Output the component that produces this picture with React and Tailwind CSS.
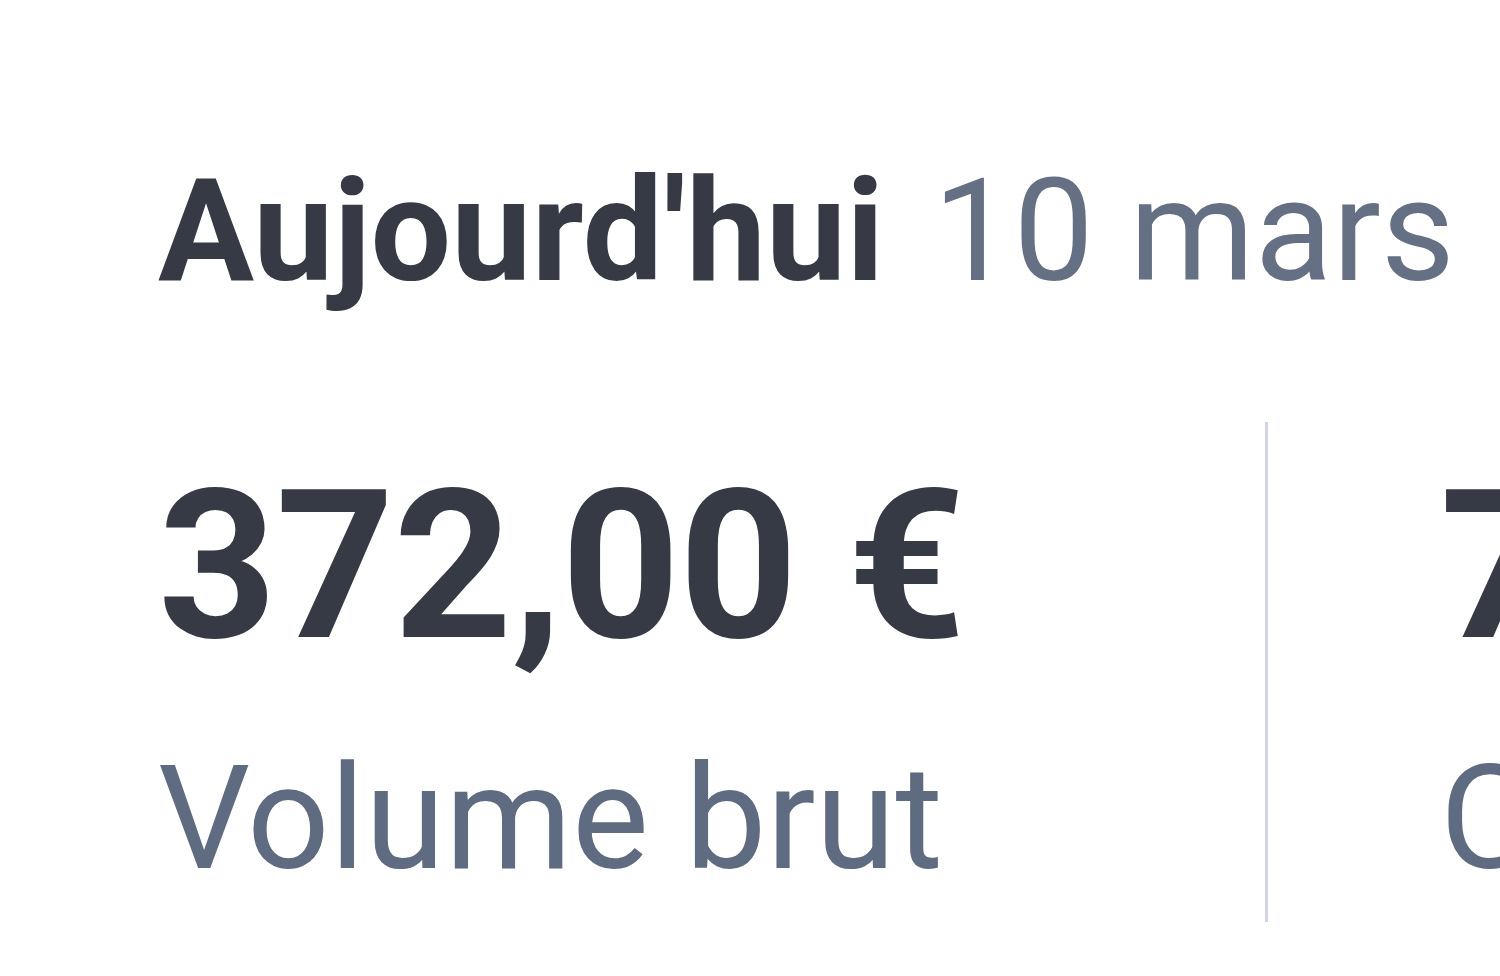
import React from 'react';

const stats = [
    { value: '372,00 €', label: 'Volume brut' },
    { value: '7', label: 'Commandes' },
];

const App = () => {
    return (
        <div className="w-[1500px] h-[976px] overflow-hidden bg-white" style={{ fontFamily: 'Roboto, "Noto Sans", sans-serif' }}>
            <div className="pt-[160px] pl-[158px]">
                <h1 className="flex items-baseline whitespace-nowrap text-[143px] leading-none">
                    <span className="font-bold text-[#363a44]">Aujourd'hui</span>
                    <span className="ml-[49px] font-normal text-[#667085]">10 mars</span>
                </h1>

                <div className="mt-[119px] flex h-[500px]">
                    <div className="w-[1107px] shrink-0 pt-[41px]">
                        <div className="text-[207px] leading-none font-bold tracking-[-1px] text-[#363a44] whitespace-nowrap">{stats[0].value}</div>
                        <div className="mt-[76px] text-[145px] leading-none text-[#5f6b80] whitespace-nowrap">{stats[0].label}</div>
                    </div>
                    <div className="w-[3px] shrink-0 bg-[#cfd6e2]" />
                    <div className="shrink-0 pl-[172px] pt-[41px]">
                        <div className="text-[207px] leading-none font-bold tracking-[-1px] text-[#363a44] whitespace-nowrap">{stats[1].value}</div>
                        <div className="mt-[76px] text-[145px] leading-none text-[#5f6b80] whitespace-nowrap">{stats[1].label}</div>
                    </div>
                </div>
            </div>
        </div>
    );
};

export default App;
